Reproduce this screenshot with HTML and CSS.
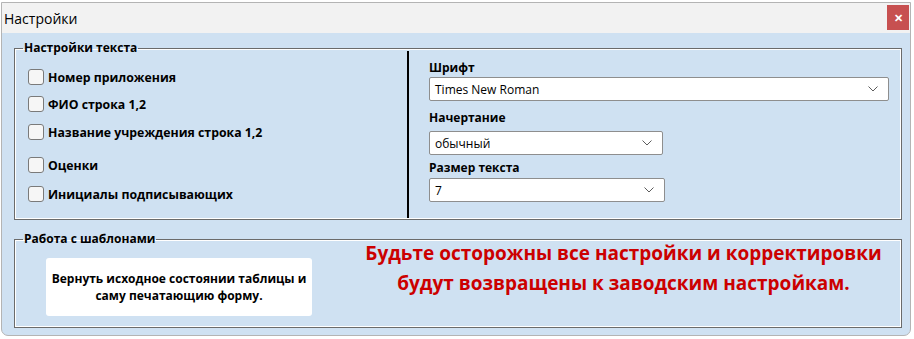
FILE: index.html
```html
<!DOCTYPE html>
<html>
<head>
	<meta charset="utf-8">
	<title>Настройки</title>
	<link rel="stylesheet" href="styles.css">
</head>
<body>

<div class="window">
	<div class="titlebar">
		<span class="title">Настройки</span>
		<div class="close-button">&#x2715;</div>
	</div>
	<div class="content">
		<fieldset class="group text-group">
			<legend>Настройки текста</legend>
			<div class="checks">
				<label class="check check-1"><span class="box"></span>Номер приложения</label>
				<label class="check check-2"><span class="box"></span>ФИО строка 1,2</label>
				<label class="check check-3"><span class="box"></span>Название учреждения строка 1,2</label>
				<label class="check check-4"><span class="box"></span>Оценки</label>
				<label class="check check-5"><span class="box"></span>Инициалы подписывающих</label>
			</div>
			<div class="fonts">
				<div class="field-label label-font">Шрифт</div>
				<div class="select select-font">Times New Roman<svg viewBox="0 0 10 6" width="10" height="6"><path d="M0.5 0.5 L5 5 L9.5 0.5" fill="none" stroke="#5c5c5c" stroke-width="1"/></svg></div>
				<div class="field-label label-style">Начертание</div>
				<div class="select select-style">обычный<svg viewBox="0 0 10 6" width="10" height="6"><path d="M0.5 0.5 L5 5 L9.5 0.5" fill="none" stroke="#5c5c5c" stroke-width="1"/></svg></div>
				<div class="field-label label-size">Размер текста</div>
				<div class="select select-size">7<svg viewBox="0 0 10 6" width="10" height="6"><path d="M0.5 0.5 L5 5 L9.5 0.5" fill="none" stroke="#5c5c5c" stroke-width="1"/></svg></div>
			</div>
		</fieldset>
		<fieldset class="group template-group">
			<legend>Работа с шаблонами</legend>
			<div class="reset-button">Вернуть исходное состоянии таблицы и<br>саму печатающию форму.</div>
			<p class="warning">Будьте осторожны все настройки и корректировки<br>будут возвращены к заводским настройкам.</p>
		</fieldset>
	</div>
</div>

</body>
</html>
```

FILE: styles.css
```css
* {
	box-sizing: border-box;
}

body {
	margin: 0;
	background: #ffffff;
	font-family: "Open Sans", sans-serif;
	color: #000000;
}

.window {
	width: 910px;
	height: 334px;
	margin: 2px 0 0 1px;
	border: 1px solid #b4b4b4;
	border-radius: 0 0 7px 7px;
	overflow: hidden;
	display: flex;
	flex-direction: column;
	background: #cfe1f2;
}

.titlebar {
	height: 30px;
	background: #f2f2f2;
	display: flex;
	align-items: center;
	justify-content: space-between;
	padding: 0 1px 0 2px;
}

.title {
	font-size: 14px;
}

.close-button {
	width: 22px;
	height: 25px;
	margin: 0 0 1px 0;
	background: #c75050;
	color: #ffffff;
	font-size: 11px;
	font-weight: bold;
	display: flex;
	align-items: center;
	justify-content: center;
}

.content {
	flex: 1;
	padding: 6px 8px 0 12px;
}

.group {
	margin: 0;
	border: 1px solid #6b6b6b;
	box-shadow: inset 0 0 0 1px #ffffff;
	padding: 0;
}

.group legend {
	margin-left: 8px;
	padding: 0 1px;
	font-size: 12px;
	font-weight: bold;
	line-height: 18px;
}

.text-group {
	height: 181px;
	display: flex;
}

.checks {
	width: 392px;
	padding: 10px 0 0 13px;
	display: flex;
	flex-direction: column;
}

.check {
	display: flex;
	align-items: center;
	height: 20px;
	font-size: 12.3px;
	font-weight: bold;
}

.check-2 { margin-top: 7px; }
.check-3 { margin-top: 8px; }
.check-4 { margin-top: 13px; }
.check-5 { margin-top: 9px; }

.box {
	width: 16px;
	height: 16px;
	margin-right: 4px;
	border: 1px solid #7a7a7a;
	border-radius: 3px;
	background: #f6f6f6;
}

.fonts {
	flex: 1;
	margin: -6px 0 1px 0;
	border-left: 2px solid #000000;
	padding: 9px 12px 0 20px;
}

.field-label {
	font-size: 12px;
	font-weight: bold;
	line-height: 16px;
}

.select {
	height: 24px;
	background: #ffffff;
	border: 1px solid #8e8e8e;
	border-radius: 2px;
	font-size: 12px;
	display: flex;
	align-items: center;
	justify-content: space-between;
	padding: 0 10px 0 5px;
}

.select-font { margin-top: 1px; }
.select-style { width: 234px; margin-top: 5px; }
.select-size { width: 236px; margin-top: 2px; }
.label-style { margin-top: 9px; }
.label-size { margin-top: 5px; }

.template-group {
	margin-top: 10px;
	height: 98px;
	display: flex;
	align-items: flex-start;
}

.reset-button {
	width: 266px;
	height: 58px;
	margin: 10px 0 0 31px;
	background: #ffffff;
	border-radius: 3px;
	font-size: 12px;
	font-weight: bold;
	line-height: 17px;
	text-align: center;
	display: flex;
	align-items: center;
	justify-content: center;
}

.warning {
	flex: 1;
	margin: -10px 0 0 0;
	padding-left: 34px;
	color: #cc0000;
	font-size: 19px;
	font-weight: bold;
	line-height: 30px;
	text-align: center;
}
```
